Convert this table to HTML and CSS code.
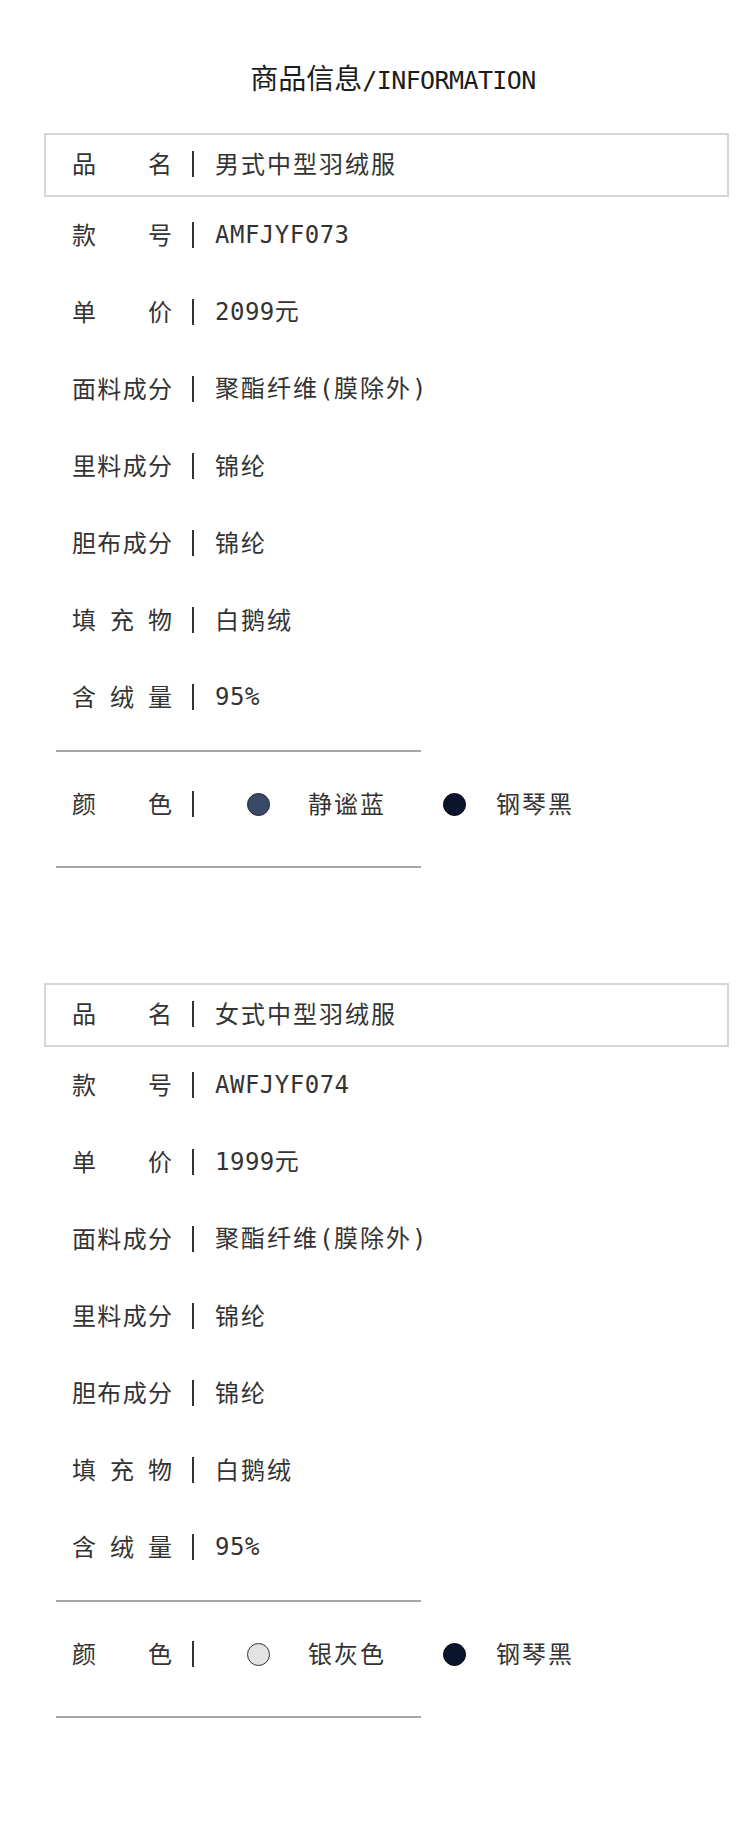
FILE: index.html
```html
<!DOCTYPE html>
<html lang="zh-CN">
<head>
<meta charset="utf-8">
<title>商品信息</title>
<link rel="stylesheet" href="styles.css">
</head>
<body>
<div class="page">
  <h1 class="title">商品信息<span class="title-en">/INFORMATION</span></h1>

  <section class="spec">
    <div class="row row-name"><span class="label">品名</span><i class="bar"></i><span class="value">男式中型羽绒服</span></div>
    <div class="row"><span class="label">款号</span><i class="bar"></i><span class="value"><span class="en">AMFJYF073</span></span></div>
    <div class="row"><span class="label">单价</span><i class="bar"></i><span class="value"><span class="en">2099</span>元</span></div>
    <div class="row"><span class="label">面料成分</span><i class="bar"></i><span class="value">聚酯纤维<span class="en">(</span>膜除外<span class="en">)</span></span></div>
    <div class="row"><span class="label">里料成分</span><i class="bar"></i><span class="value">锦纶</span></div>
    <div class="row"><span class="label">胆布成分</span><i class="bar"></i><span class="value">锦纶</span></div>
    <div class="row"><span class="label">填充物</span><i class="bar"></i><span class="value">白鹅绒</span></div>
    <div class="row"><span class="label">含绒量</span><i class="bar"></i><span class="value"><span class="en">95%</span></span></div>
    <hr class="rule">
    <div class="row row-colors">
      <span class="label">颜色</span><i class="bar"></i>
      <span class="swatch swatch-blue"></span><span class="color-name">静谧蓝</span>
      <span class="swatch swatch-black"></span><span class="color-name">钢琴黑</span>
    </div>
    <hr class="rule">
  </section>

  <section class="spec">
    <div class="row row-name"><span class="label">品名</span><i class="bar"></i><span class="value">女式中型羽绒服</span></div>
    <div class="row"><span class="label">款号</span><i class="bar"></i><span class="value"><span class="en">AWFJYF074</span></span></div>
    <div class="row"><span class="label">单价</span><i class="bar"></i><span class="value"><span class="en">1999</span>元</span></div>
    <div class="row"><span class="label">面料成分</span><i class="bar"></i><span class="value">聚酯纤维<span class="en">(</span>膜除外<span class="en">)</span></span></div>
    <div class="row"><span class="label">里料成分</span><i class="bar"></i><span class="value">锦纶</span></div>
    <div class="row"><span class="label">胆布成分</span><i class="bar"></i><span class="value">锦纶</span></div>
    <div class="row"><span class="label">填充物</span><i class="bar"></i><span class="value">白鹅绒</span></div>
    <div class="row"><span class="label">含绒量</span><i class="bar"></i><span class="value"><span class="en">95%</span></span></div>
    <hr class="rule">
    <div class="row row-colors">
      <span class="label">颜色</span><i class="bar"></i>
      <span class="swatch swatch-silver"></span><span class="color-name">银灰色</span>
      <span class="swatch swatch-black"></span><span class="color-name">钢琴黑</span>
    </div>
    <hr class="rule">
  </section>
</div>
</body>
</html>
```
FILE: styles.css
```css
* { box-sizing: border-box; }

html, body {
  margin: 0;
  padding: 0;
  background: #ffffff;
}

body {
  font-family: "Noto Sans CJK SC", "Noto Sans", sans-serif;
  color: #333333;
  width: 750px;
  min-height: 1838px;
}

.page {
  padding-bottom: 120px;
}

.title {
  margin: 0;
  padding: 57px 0 0 36px;
  height: 100px;
  line-height: 40px;
  font-size: 28px;
  font-weight: 400;
  color: #1c1c1c;
  text-align: center;
}

.title-en {
  font-family: "DejaVu Sans Mono", "Liberation Mono", monospace;
  font-size: 25px;
  letter-spacing: -0.6px;
}

.spec {
  margin: 33px 0 0 44px;
  width: 685px;
}

.spec + .spec {
  margin-top: 115px;
}

.row {
  display: flex;
  align-items: center;
  height: 77px;
  padding-left: 28px;
  padding-bottom: 4px;
  font-size: 24px;
  line-height: 30px;
}

.row-name {
  height: 64px;
  padding-left: 26px;
  border: 2px solid #d6d6d6;
}

.label {
  flex: 0 0 100px;
  width: 100px;
  text-align: justify;
  text-align-last: justify;
  letter-spacing: 0;
  color: #333333;
}

.bar {
  flex: 0 0 2px;
  width: 2px;
  height: 26px;
  margin: 2px 21px 0 20px;
  background: #333333;
}

.value {
  letter-spacing: 2px;
  white-space: nowrap;
  color: #333333;
}

.en {
  font-family: "DejaVu Sans Mono", "Liberation Mono", monospace;
  letter-spacing: 0.5px;
}

.rule {
  display: block;
  width: 365px;
  height: 2px;
  margin: 14px 0 0 12px;
  border: 0;
  background: #a6a6a6;
}

.row-colors {
  height: 114px;
  padding-bottom: 12px;
}

.row-colors + .rule {
  margin-top: 0;
}

.swatch {
  flex: 0 0 23px;
  width: 23px;
  height: 23px;
  border-radius: 50%;
  border: 1px solid #1a1f2b;
  margin-left: 32px;
  margin-top: 2px;
}

.swatch + .color-name {
  margin-left: 38px;
}

.color-name + .swatch {
  margin-left: 57px;
}

.color-name + .swatch + .color-name {
  margin-left: 30px;
}

.color-name {
  letter-spacing: 2px;
  white-space: nowrap;
  color: #333333;
}

.swatch-blue {
  background: #3a4966;
  border-color: #1f2638;
}

.swatch-black {
  background: #0a142c;
  border-color: #05070d;
}

.swatch-silver {
  background: #e3e3e3;
  border-color: #333333;
}
```
